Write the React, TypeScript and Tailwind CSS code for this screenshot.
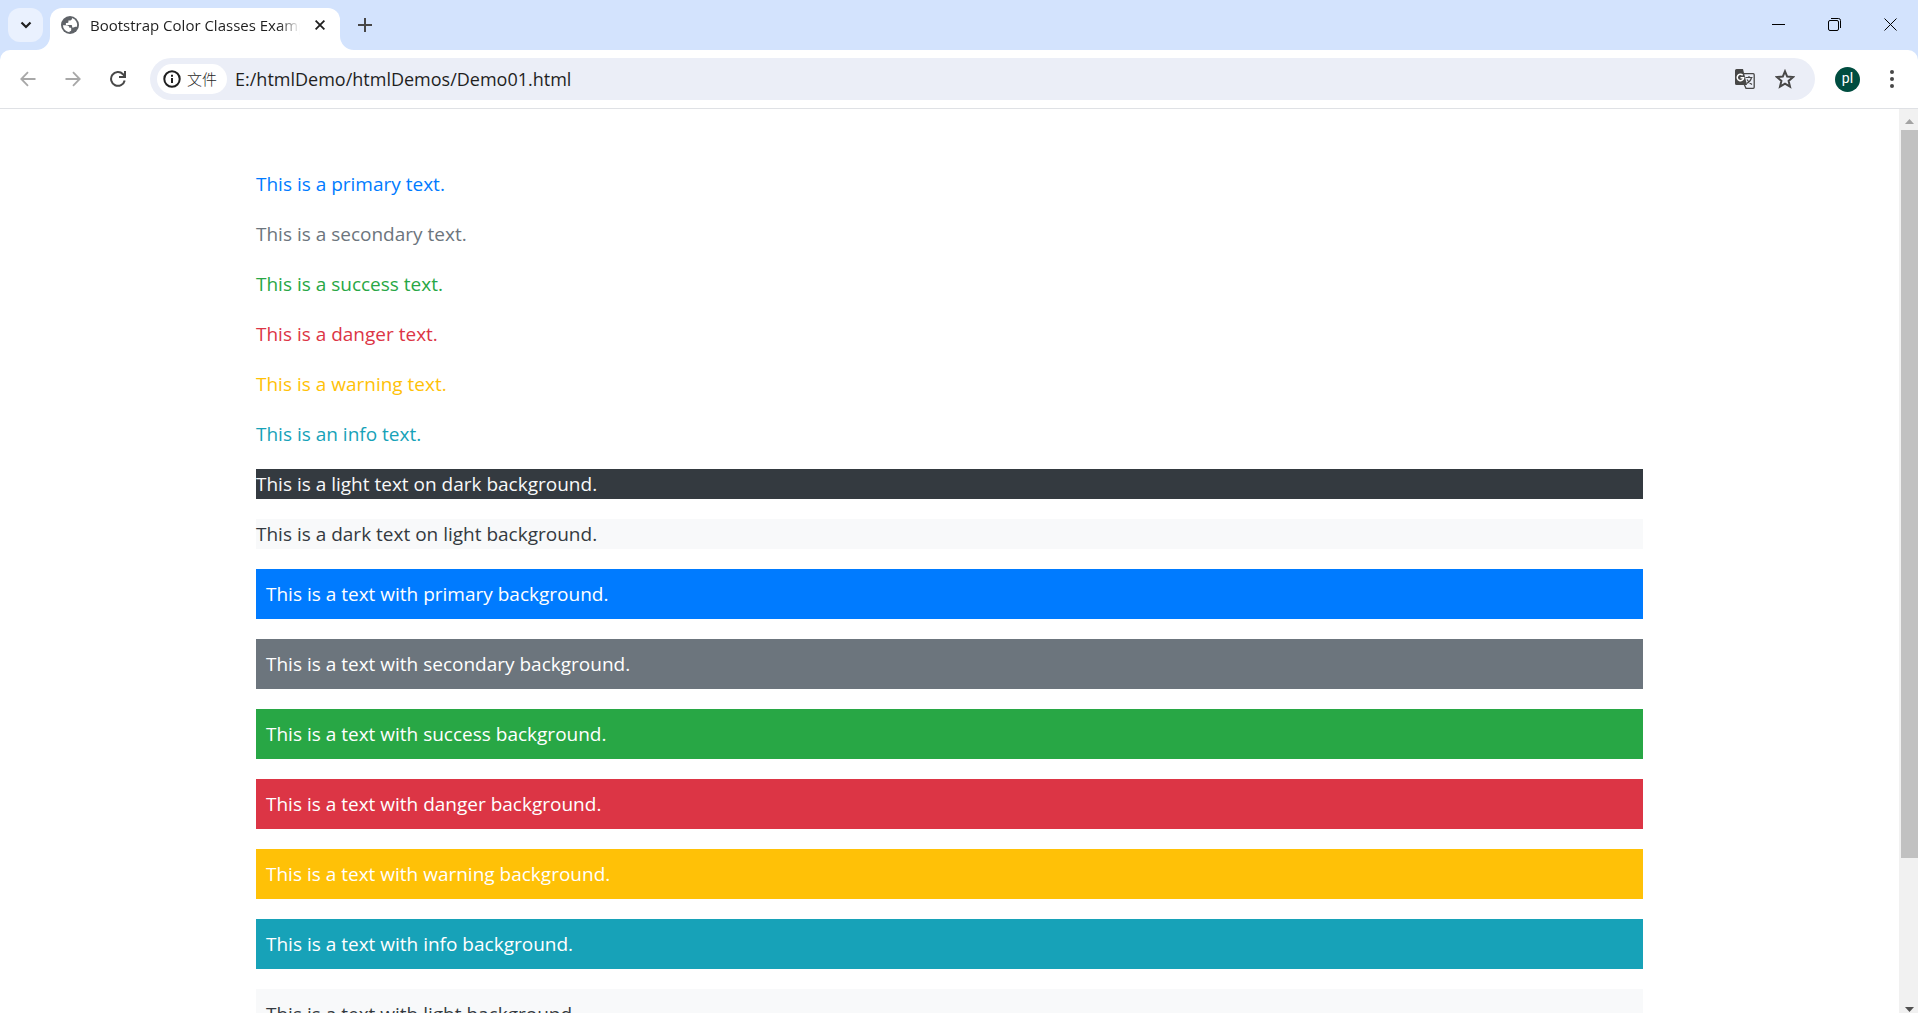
import React from "react";

const textRows = [
  { label: "This is a primary text.", style: "text-[#007bff]" },
  { label: "This is a secondary text.", style: "text-[#6c757d]" },
  { label: "This is a success text.", style: "text-[#28a745]" },
  { label: "This is a danger text.", style: "text-[#dc3545]" },
  { label: "This is a warning text.", style: "text-[#ffc107]" },
  { label: "This is an info text.", style: "text-[#17a2b8]" },
  { label: "This is a light text on dark background.", style: "bg-[#343a40] text-[#f8f9fa]" },
  { label: "This is a dark text on light background.", style: "bg-[#f8f9fa] text-[#343a40]" },
];

const blockRows = [
  { label: "This is a text with primary background.", style: "bg-[#007bff] text-white" },
  { label: "This is a text with secondary background.", style: "bg-[#6c757d] text-white" },
  { label: "This is a text with success background.", style: "bg-[#28a745] text-white" },
  { label: "This is a text with danger background.", style: "bg-[#dc3545] text-white" },
  { label: "This is a text with warning background.", style: "bg-[#ffc107] text-white" },
  { label: "This is a text with info background.", style: "bg-[#17a2b8] text-white" },
  { label: "This is a text with light background.", style: "bg-[#f8f9fa] text-[#343a40]" },
];

function Globe() {
  return (
    <svg viewBox="0 0 18 18" className="size-[18px] shrink-0" aria-hidden="true">
      <circle cx="9" cy="9" r="9" fill="#5f6368" />
      <path
        d="M1.900 9.200H5.500c1.700 0 2.900 1 2.900 2.600h1.800v2.500c0 .5-.4.900-.9.900H8.600v1a7.200 7.200 0 0 1-6.700-7z"
        fill="#fff"
      />
      <path
        d="M11 2.100v.5c0 1-.8 1.800-1.800 1.800H7.400v1.700c0 .5-.4.900-.9.900H4.900v1.900h5.300c.5 0 .9.400.9.900v1.600h1.300c1 0 1.800-.6 2.700-.6h.9A7.200 7.200 0 0 0 11 2.100z"
        fill="#fff"
      />
    </svg>
  );
}

function TabStrip() {
  return (
    <div className="flex h-[50px] items-start bg-[#d3e3fd] pl-2 pt-2">
      <button aria-label="Search tabs" className="flex h-[34px] w-[35px] items-center justify-center rounded-xl bg-[#eaf1fe]">
        <svg viewBox="0 0 12 8" className="h-2 w-3" fill="none" stroke="#1f1f1f" strokeWidth="2.200" aria-hidden="true">
          <path d="M1.500 1.500 6 6l4.500-4.500" />
        </svg>
      </button>
      <div className="relative ml-[7px] flex h-[42px] w-[290px] items-center rounded-t-xl bg-white pb-2 pl-[11px]">
        <svg viewBox="0 0 14 14" className="absolute bottom-0 right-full size-3.5" fill="#fff" aria-hidden="true">
          <path d="M14 0v14H0A14 14 0 0 0 14 0z" />
        </svg>
        <svg viewBox="0 0 14 14" className="absolute bottom-0 left-full size-3.5" fill="#fff" aria-hidden="true">
          <path d="M0 0v14h14A14 14 0 0 1 0 0z" />
        </svg>
        <Globe />
        <span className="ml-[11px] w-[210px] overflow-hidden whitespace-nowrap font-['Open_Sans',sans-serif] text-[15px] leading-5 text-[#1f1f1f] mask-r-from-90%">
          Bootstrap Color Classes Example
        </span>
        <button aria-label="Close tab" className="ml-[11px] p-1">
          <svg viewBox="0 0 10 10" className="size-2.5" stroke="#1f1f1f" strokeWidth="1.800" aria-hidden="true">
            <path d="m.6.6 8.800 8.800M9.400.6.6 9.400" />
          </svg>
        </button>
      </div>
      <button aria-label="New tab" className="ml-[15px] flex h-[34px] w-5 items-center justify-center">
        <svg viewBox="0 0 14 14" className="size-3.5" stroke="#474747" strokeWidth="2" aria-hidden="true">
          <path d="M7 0v14M0 7h14" />
        </svg>
      </button>
      <div className="ml-auto flex h-8 items-center">
        <button aria-label="Minimize" className="flex w-14 justify-center">
          <svg viewBox="0 0 13 13" className="size-[13px]" fill="none" stroke="#000" aria-hidden="true">
            <path d="M0 6.500h13" />
          </svg>
        </button>
        <button aria-label="Restore" className="flex w-14 justify-center">
          <svg viewBox="0 0 13 13" className="size-[13px]" fill="none" stroke="#000" aria-hidden="true">
            <rect x=".5" y="2.500" width="10" height="10" rx="1.500" />
            <path d="M3 .5h7.500a2 2 0 0 1 2 2V10" />
          </svg>
        </button>
        <button aria-label="Close window" className="flex w-14 justify-center">
          <svg viewBox="0 0 13 13" className="size-[13px]" fill="none" stroke="#000" aria-hidden="true">
            <path d="m.5.5 12 12M12.500.5l-12 12" />
          </svg>
        </button>
      </div>
    </div>
  );
}

function Toolbar() {
  return (
    <div className="bg-[#d3e3fd]">
      <div className="flex h-[59px] items-center rounded-t-[10px] border-b border-[#dfe1e5] bg-white pl-5 pr-6">
        <button aria-label="Back">
          <svg viewBox="0 0 16 16" className="size-4" fill="none" stroke="#a8a8a8" strokeWidth="1.800" aria-hidden="true">
            <path d="M15.500 8H1.500M8 1.200 1.300 8 8 14.800" />
          </svg>
        </button>
        <button aria-label="Forward" className="ml-[29px]">
          <svg viewBox="0 0 16 16" className="size-4" fill="none" stroke="#a8a8a8" strokeWidth="1.800" aria-hidden="true">
            <path d="M.5 8h14M8 1.200 14.700 8 8 14.800" />
          </svg>
        </button>
        <button aria-label="Reload" className="ml-[29px]">
          <svg viewBox="0 0 16 16" className="size-4" fill="none" stroke="#474747" strokeWidth="2" aria-hidden="true">
            <path d="M14.700 9.500A6.900 6.900 0 1 1 13 3.200L14.500 5M15 0v6H9" />
          </svg>
        </button>
        <div className="ml-6 flex h-[42px] flex-1 items-center rounded-full bg-[#ebeef7] pl-[7px] pr-5">
          <button className="flex h-[30px] items-center gap-1.5 rounded-full bg-white pl-1.5 pr-2.5 font-['Noto_Sans_CJK_SC',sans-serif] text-[15px] font-light leading-5 text-[#1f1f1f]">
            <svg viewBox="0 0 18 18" className="size-[18px]" fill="none" stroke="#1f1f1f" strokeWidth="2" aria-hidden="true">
              <circle cx="9" cy="9" r="7.700" />
              <path d="M9 8v5M9 4.800v2" />
            </svg>
            文件
          </button>
          <input
            aria-label="Address"
            defaultValue="E:/htmlDemo/htmlDemos/Demo01.html"
            className="ml-2 min-w-0 flex-1 bg-transparent font-['Open_Sans',sans-serif] text-lg leading-6 text-[#1f1f1f] outline-none"
          />
          <button aria-label="Translate this page">
            <svg viewBox="0 0 20 20" className="size-5" aria-hidden="true">
              <path d="M9 4.700h9.200a1 1 0 0 1 1 1v12.600a1 1 0 0 1-1 1H11L9 15" fill="none" stroke="#474747" strokeWidth="1.300" />
              <path d="M10.500 8.500h7M14 7v1.500M16.500 8.500c-.6 2.700-2.500 4.800-5 6M12 10.500c1 2 2.500 3.500 5 5" fill="none" stroke="#474747" strokeWidth="1.200" />
              <path d="M1.500 0H8l4 16H1.500A1.500 1.500 0 0 1 0 14.500v-13A1.500 1.500 0 0 1 1.500 0z" fill="#474747" />
              <path d="M7.700 6.200A3.200 3.200 0 1 0 8.600 8.800H5.500" fill="none" stroke="#fff" strokeWidth="1.500" />
            </svg>
          </button>
          <button aria-label="Bookmark this page" className="ml-5">
            <svg viewBox="0 0 20 20" className="size-5" fill="none" stroke="#474747" strokeWidth="2" aria-hidden="true">
              <path d="m10 2.300 2.200 5.300 5.900.5-4.500 3.800 1.400 5.700-5-3-5 3 1.400-5.700-4.500-3.800 5.900-.5z" />
            </svg>
          </button>
        </div>
        <button aria-label="Profile" className="ml-5 flex size-[25px] items-center justify-center rounded-full bg-[#004d40] pb-0.5 font-['Roboto',sans-serif] text-sm leading-4 text-white">
          pl
        </button>
        <button aria-label="Menu" className="ml-[30px]">
          <svg viewBox="0 0 4 18" className="h-[18px] w-1" fill="#474747" aria-hidden="true">
            <circle cx="2" cy="2" r="2" />
            <circle cx="2" cy="9" r="2" />
            <circle cx="2" cy="16" r="2" />
          </svg>
        </button>
      </div>
    </div>
  );
}

function Scrollbar() {
  return (
    <div className="flex w-[19px] shrink-0 flex-col items-center bg-[#f1f1f1] pl-0.5" aria-hidden="true">
      <div className="flex h-[21px] items-center pt-1">
        <svg viewBox="0 0 9 5" className="h-[5px] w-[9px]" fill="#a3a3a3">
          <path d="M0 5 4.500 0 9 5z" />
        </svg>
      </div>
      <div className="flex w-full flex-1 flex-col">
        <div className="w-full flex-[728] bg-[#c1c1c1]" />
        <div className="flex-[142]" />
      </div>
      <div className="flex h-[13px] items-end pb-px">
        <svg viewBox="0 0 9 5" className="h-[5px] w-[9px]" fill="#505050">
          <path d="M0 0h9L4.500 5z" />
        </svg>
      </div>
    </div>
  );
}

export default function App() {
  return (
    <div className="flex h-screen flex-col overflow-hidden bg-white">
      <header className="shrink-0">
        <TabStrip />
        <Toolbar />
      </header>
      <div className="flex min-h-0 flex-1">
        <main className="min-w-0 flex-1 overflow-hidden">
          <div className="mx-auto mt-15 flex max-w-[1425px] flex-col gap-5 px-[19px] font-['Open_Sans',sans-serif] text-[19px] leading-[30px]">
            {textRows.map((row) => (
              <p key={row.label} className={row.style}>
                {row.label}
              </p>
            ))}
            {blockRows.map((row) => (
              <p key={row.label} className={`p-2.5 ${row.style}`}>
                {row.label}
              </p>
            ))}
          </div>
        </main>
        <Scrollbar />
      </div>
    </div>
  );
}
